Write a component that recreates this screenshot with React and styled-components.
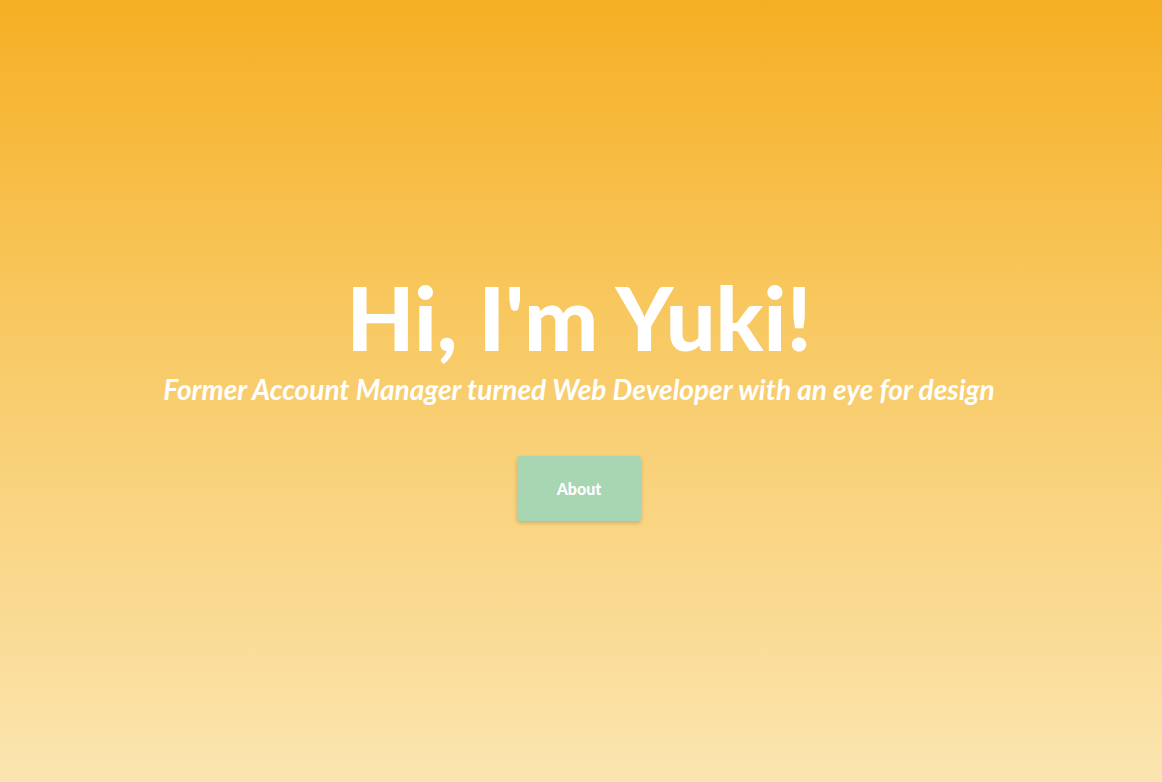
import React from "react";
import styled, { createGlobalStyle } from "styled-components";

const GlobalStyle = createGlobalStyle`
	html, body {
		margin: 0;
		padding: 0;
	}
	body {
		font-family: "Lato", "Liberation Sans", sans-serif;
	}
`;

export default function App() {
	return (
		<>
			<GlobalStyle />
			<Hero>
				<Title>Hi, I'm Yuki!</Title>
				<Tagline>Former Account Manager turned Web Developer with an eye for design</Tagline>
				<AboutButton>About</AboutButton>
			</Hero>
		</>
	);
}

const Hero = styled.section`
	height: 782px;
	display: flex;
	flex-direction: column;
	align-items: center;
	justify-content: center;
	background: linear-gradient(180deg, #f6af24 0%, #f8c860 40%, #fbe5b0 100%);
	color: #fff;
	padding: 12px 4px 0 0;
	box-sizing: border-box;
`;

const Title = styled.h1`
	margin: 0;
	font-size: 88px;
	font-weight: 900;
	line-height: 1;
`;

const Tagline = styled.h2`
	margin: 12px 0 0;
	font-size: 28px;
	font-weight: 700;
	font-style: italic;
	line-height: 1.2;
`;

const AboutButton = styled.button`
	margin-top: 49px;
	width: 124px;
	height: 65px;
	border: none;
	border-radius: 3px;
	background: #a8d5b2;
	color: #fff;
	font-family: inherit;
	font-size: 16px;
	font-weight: 900;
	box-shadow: 0 2px 4px rgba(0, 0, 0, 0.18);
	cursor: pointer;
`;
